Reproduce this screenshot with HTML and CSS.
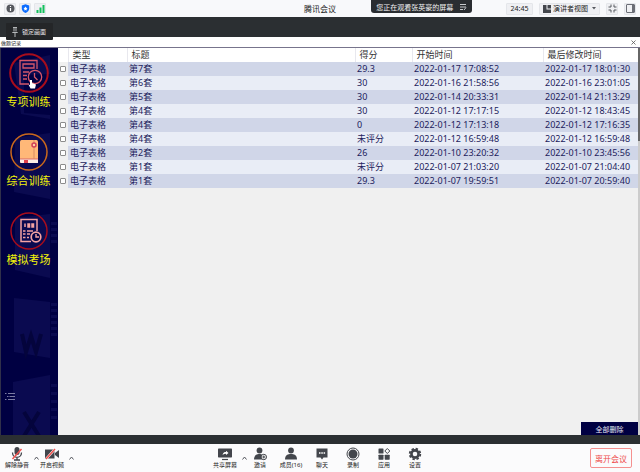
FILE: index.html
```html
<!DOCTYPE html>
<html lang="zh-CN">
<head>
  <meta charset="UTF-8" />
  <meta name="viewport" content="width=device-width, initial-scale=1.0"/>
  <title>腾讯会议</title>
  <link rel="stylesheet" href="styles.css">
</head>
<body>
  <div class="meeting">
    <header class="topbar">
      <div class="status">
        <span class="chip"><svg width="9" height="9" viewBox="0 0 9 9"><circle cx="4.5" cy="4.5" r="4" fill="#55585e"/><path d="M4.5 4v3M4.5 2v1" stroke="#fff" stroke-width="1.2"/></svg></span>
        <span class="chip"><svg width="9" height="9" viewBox="0 0 9 9"><path d="M4.5 0.3L8.2 1.6V4.5C8.2 6.8 6.5 8.2 4.5 8.9C2.5 8.2 0.8 6.8 0.8 4.5V1.6Z" fill="#0b6cff"/><path d="M4.5 2.6l.7 1.2 1.3.3-.9 1 .1 1.4-1.2-.6-1.2.6.1-1.4-.9-1 1.3-.3z" fill="#fff"/></svg></span>
        <span class="chip"><svg width="9" height="9" viewBox="0 0 9 9"><path d="M1.5 9V6M4.5 9V3.5M7.5 9V1" stroke="#12c15c" stroke-width="2"/></svg></span>
      </div>
      <h1>腾讯会议</h1>
      <div class="view-tools">
        <span class="chip timer">24:45</span>
        <button type="button" class="chip view-btn">
          <svg width="8" height="8" viewBox="0 0 8 8"><path d="M0 0h3.500v4.500H8V8H0z M4.500 0H8v3.500H4.500z" fill="#43464c"/></svg>
          演讲者视图
          <svg class="caret" width="4" height="3" viewBox="0 0 4 3"><path d="M0 0h4L2 2.500z" fill="#55585e"/></svg>
        </button>
        <button type="button" class="chip" aria-label="全屏"><svg width="9" height="9" viewBox="0 0 9 9" fill="none" stroke="#55585e"><path d="M3 .5v2.500H.5M6 .5v2.500h2.500M3 8.500V6H.5M6 8.500V6h2.500"/></svg></button>
        <button type="button" class="chip" aria-label="侧栏"><svg width="9" height="9" viewBox="0 0 9 9" fill="none" stroke="#6b6e76"><rect x=".5" y=".5" width="8" height="8" rx=".5"/><path d="M7 1v7" stroke-width="2"/></svg></button>
      </div>
      <div class="watching">
        <span>您正在观看张英豪的屏幕</span>
        <svg width="8" height="8" viewBox="0 0 8 8" fill="none" stroke="#c8cacd"><path d="M1 1.500h6M1 4h6M1 6.500h3M5 7l2-2.500"/></svg>
      </div>
    </header>

    <div class="stage">
      <button type="button" class="pin">
        <svg width="6" height="10" viewBox="0 0 6 10" fill="none" stroke="#b5b8ba"><path d="M1 .5h4M2 1v3.500M4 1v3.500M.3 5.500h5.400M3 5.500V10"/></svg>
        锁定画面
      </button>

      <div class="window">
        <div class="window-title">
          <span>做题记录</span>
          <button type="button" aria-label="关闭"><svg width="5" height="5" viewBox="0 0 5 5"><path d="M.5 .5l4 4M4.500 .5l-4 4" stroke="#555" stroke-width=".8"/></svg></button>
        </div>

        <div class="window-body">
          <nav class="sidebar">
            <svg class="pattern" width="57" height="388" viewBox="0 0 57 388" aria-hidden="true">
              <g fill="#0a0a50">
                <path d="M13 15L49 7V26L23 27V65L49 67V71L20 66zM14 90L49 85V151L13 144zM14 170L49 166V230L14 222zM13 250L49 254V310L13 304zM12 334L49 327V388H12z"/>
                <path d="M50 174h6v3h-6zM50 180h6v3h-6zM50 186h6v3h-6zM50 192h6v3h-6zM50 255h6v3h-6zM50 261h6v3h-6zM50 267h6v3h-6zM50 273h6v3h-6zM50 279h6v3h-6zM50 285h6v3h-6zM50 336h6v3h-6zM50 344h6v3h-6zM50 352h6v3h-6zM50 360h6v3h-6zM50 368h6v3h-6z"/>
              </g>
              <g fill="none" stroke="#04043c" stroke-width="4"><path d="M21 286l4 18 5-16 5 16 5-18M23 364l15 24M38 364l-15 24"/></g>
            </svg>
            <a href="#" class="nav-item active">
              <svg width="40" height="40" viewBox="0 0 40 40" fill="none">
                <circle cx="20" cy="20" r="18.800" stroke="#a80d1c" stroke-width="2"/>
                <g stroke="#d4576a" stroke-width="1.300"><path d="M20 31H11V7.500H28V16M14 11h11v4H14zM14 19h6M14 22.500h4M14 26h4"/><circle cx="26" cy="24" r="6.700"/><path d="M25.500 20v4l3 3"/></g>
                <path d="M21 27v5l-1.500-.5 2 4h4.500l1-4-4-1.500V27z" fill="#fff"/>
              </svg>
              <span>专项训练</span>
            </a>
            <a href="#" class="nav-item">
              <svg width="40" height="40" viewBox="0 0 40 40">
                <circle cx="20" cy="20" r="18" fill="none" stroke="#c9681c" stroke-width="1.500"/>
                <rect x="11" y="8" width="18" height="23" rx="1.500" fill="#ffb878"/>
                <path d="M11 27h18v4H12.500q-1.500 0-1.500-1.500z" fill="#fff1e6"/><path d="M11 27h18" stroke="#d96b68"/><path d="M15 28h4v3h-4z" fill="#e1424c"/>
                <path d="M25 8v19" stroke="#d98b63"/><circle cx="25" cy="13" r="2" fill="#ffd0a0" stroke="#cf3f58" stroke-width="1.500"/>
              </svg>
              <span>综合训练</span>
            </a>
            <a href="#" class="nav-item">
              <svg width="40" height="40" viewBox="0 0 40 40" fill="none">
                <circle cx="20" cy="20" r="18" stroke="#a80d1c" stroke-width="1.500"/>
                <g stroke="#f4a3a3" stroke-width="1.500"><path d="M22 30.500H12V8.500H28V20"/><path d="M16 16v-3.500M19 13h1.500v3H19zM23 13h1.500v3H23zM14 20h2.500M18 20h6M14 23h2.500M18 23h3M14 26.500h2.500M18 26.500h2"/></g>
                <circle cx="27" cy="26" r="4.800" fill="#000042" stroke="#f4a3a3" stroke-width="1.700"/><path d="M27 23v3h3" stroke="#f4a3a3" stroke-width="1.400"/>
              </svg>
              <span>模拟考场</span>
            </a>
            <button type="button" class="list-btn" aria-label="列表"><svg width="10" height="9" viewBox="0 0 10 9" stroke="#7c7ca4"><path d="M0 1.500h1.500M3 1.500h7M2 4.500h1.500M4.500 4.500H10M0 7.500h1.500M3 7.500h7"/></svg></button>
          </nav>

          <main class="records">
            <table>
              <thead>
                <tr><th class="col-check"></th><th class="col-type">类型</th><th class="col-title">标题</th><th class="col-score">得分</th><th class="col-start">开始时间</th><th class="col-edit">最后修改时间</th></tr>
              </thead>
              <tbody>
                <tr><td><input type="checkbox" aria-label="选择第7套"></td><td>电子表格</td><td>第7套</td><td>29.3</td><td>2022-01-17 17:08:52</td><td>2022-01-17 18:01:30</td></tr>
                <tr><td><input type="checkbox" aria-label="选择第6套"></td><td>电子表格</td><td>第6套</td><td>30</td><td>2022-01-16 21:58:56</td><td>2022-01-16 23:01:05</td></tr>
                <tr><td><input type="checkbox" aria-label="选择第5套"></td><td>电子表格</td><td>第5套</td><td>30</td><td>2022-01-14 20:33:31</td><td>2022-01-14 21:13:29</td></tr>
                <tr><td><input type="checkbox" aria-label="选择第4套"></td><td>电子表格</td><td>第4套</td><td>30</td><td>2022-01-12 17:17:15</td><td>2022-01-12 18:43:45</td></tr>
                <tr><td><input type="checkbox" aria-label="选择第4套"></td><td>电子表格</td><td>第4套</td><td>0</td><td>2022-01-12 17:13:18</td><td>2022-01-12 17:16:35</td></tr>
                <tr><td><input type="checkbox" aria-label="选择第4套"></td><td>电子表格</td><td>第4套</td><td>未评分</td><td>2022-01-12 16:59:48</td><td>2022-01-12 16:59:48</td></tr>
                <tr><td><input type="checkbox" aria-label="选择第2套"></td><td>电子表格</td><td>第2套</td><td>26</td><td>2022-01-10 23:20:32</td><td>2022-01-10 23:45:56</td></tr>
                <tr><td><input type="checkbox" aria-label="选择第1套"></td><td>电子表格</td><td>第1套</td><td>未评分</td><td>2022-01-07 21:03:20</td><td>2022-01-07 21:04:40</td></tr>
                <tr><td><input type="checkbox" aria-label="选择第1套"></td><td>电子表格</td><td>第1套</td><td>29.3</td><td>2022-01-07 19:59:51</td><td>2022-01-07 20:59:40</td></tr>
              </tbody>
            </table>
            <button type="button" class="delete-all">全部删除</button>
          </main>
          <div class="scrollbar"></div>
        </div>
      </div>
    </div>

    <footer class="toolbar">
      <div class="tools">
        <button type="button" class="tool"><svg width="14" height="14" viewBox="0 0 14 14" fill="none" stroke="#43464c"><rect x="4.500" y="0" width="5" height="8" rx="2.500" fill="#43464c" stroke="none"/><path d="M2.500 5.500C2.500 12 11.500 12 11.500 5.500M7 10.500V13M4 13h6" stroke-width="1.300"/><path d="M2.500 12L11.500 2" stroke="#f0524f" stroke-width="1.500"/></svg>解除静音</button>
        <button type="button" class="more" aria-label="音频选项"><svg width="5" height="4" viewBox="0 0 5 4"><path d="M.5 3.500l2-2.500 2 2.500" fill="none" stroke="#55585e"/></svg></button>
        <button type="button" class="tool"><svg width="14" height="14" viewBox="0 0 14 14"><path d="M0 2.500h9.500v9H0zM10 6l4-3v8l-4-3z" fill="#43464c"/><path d="M1 12L10 2" stroke="#fff" stroke-width="2.500"/><path d="M1 12L10 2" stroke="#f0524f" stroke-width="1.500"/></svg>开启视频</button>
        <button type="button" class="more" aria-label="视频选项"><svg width="5" height="4" viewBox="0 0 5 4"><path d="M.5 3.500l2-2.500 2 2.500" fill="none" stroke="#55585e"/></svg></button>
      </div>
      <div class="tools center">
        <button type="button" class="tool"><svg width="14" height="14" viewBox="0 0 14 14"><rect x="0" y="1.500" width="14" height="9" rx=".7" fill="#43464c"/><path d="M4 12.500h6" stroke="#43464c" stroke-width="1.200"/><path d="M4.500 8C5 5.500 6.500 5 8 5V3.700L10.500 6 8 8V6.700Q6 6.700 4.500 8z" fill="#fff"/></svg>共享屏幕</button>
        <button type="button" class="more" aria-label="共享选项"><svg width="5" height="4" viewBox="0 0 5 4"><path d="M.5 3.500l2-2.500 2 2.500" fill="none" stroke="#55585e"/></svg></button>
        <button type="button" class="tool"><svg width="14" height="14" viewBox="0 0 14 14"><circle cx="6.500" cy="3.500" r="2.900" fill="#43464c"/><path d="M1 12.500C1 8 4 7 6.500 7S10.500 7.500 11 12.500z" fill="#43464c"/><circle cx="10.800" cy="10" r="2.700" fill="#fff" stroke="#43464c"/><path d="M9.300 10h3M10.800 8.500v3" stroke="#43464c"/></svg>邀请</button>
        <button type="button" class="tool"><svg width="14" height="14" viewBox="0 0 14 14" fill="#43464c"><circle cx="7" cy="3.500" r="2.900"/><path d="M1 12.500C1 8 4 7 7 7s6 1 6 5.500z"/></svg>成员(16)</button>
        <button type="button" class="tool"><svg width="14" height="14" viewBox="0 0 14 14"><path d="M1.500 1.500h11v9H8.500L7 12.500 5.500 10.500h-4z" fill="#43464c"/><path d="M4 6h1.500M6.300 6h1.500M8.600 6h1.500" stroke="#fff" stroke-width="1.500"/></svg>聊天</button>
        <button type="button" class="tool"><svg width="14" height="14" viewBox="0 0 14 14"><circle cx="7" cy="7" r="6" fill="none" stroke="#43464c"/><circle cx="7" cy="7" r="4.500" fill="#43464c"/></svg>录制</button>
        <button type="button" class="tool"><svg width="14" height="14" viewBox="0 0 14 14" fill="#43464c"><rect x="1.500" y="1.500" width="5" height="5" rx=".6"/><rect x="1.500" y="7.700" width="5" height="5" rx=".6"/><rect x="7.700" y="7.700" width="5" height="5" rx=".6"/><path d="M10.300 1.500l2.500 2.500-2.500 2.500L7.800 4z" fill="none" stroke="#43464c"/></svg>应用</button>
        <button type="button" class="tool"><svg width="14" height="14" viewBox="0 0 14 14"><circle cx="7" cy="7" r="3.600" fill="none" stroke="#43464c" stroke-width="2.600"/><circle cx="7" cy="7" r="5.300" fill="none" stroke="#43464c" stroke-width="1.800" stroke-dasharray="2.400 1.763"/></svg>设置</button>
      </div>
      <button type="button" class="leave">离开会议</button>
    </footer>
  </div>
</body>
</html>
```
FILE: styles.css
```css
* {
  box-sizing: border-box;
}

body {
  margin: 0;
  font-family: "Noto Sans", "Noto Sans CJK SC", sans-serif;
  font-size: 9px;
  color: #222;
}

button {
  padding: 0;
  border: none;
  background: none;
  font: inherit;
  color: inherit;
  cursor: pointer;
}

svg {
  display: block;
  flex: none;
}

.meeting {
  display: flex;
  flex-direction: column;
  min-height: 100vh;
}

/* top bar */
.topbar {
  position: relative;
  display: grid;
  grid-template-columns: 1fr auto 1fr;
  align-items: center;
  height: 17px;
  padding: 0 4px;
  background: #f8f9fb;
}

.topbar h1 {
  margin: 0;
  font-size: 8px;
  font-weight: normal;
  line-height: 16px;
}

.status,
.view-tools {
  display: flex;
  gap: 3px;
}

.view-tools {
  justify-content: flex-end;
  gap: 6px;
}

.chip {
  display: flex;
  align-items: center;
  justify-content: center;
  min-width: 12px;
  height: 12px;
  background: #eff0f3;
  border: 1px solid #e4e6ea;
  border-radius: 1px;
  font-size: 7px;
  line-height: 10px;
}

.timer {
  width: 27px;
}

.view-btn {
  gap: 2px;
  padding: 0 3px;
}

.caret {
  margin-left: 2px;
}

.watching {
  position: absolute;
  top: 0;
  left: 58%;
  display: flex;
  align-items: center;
  gap: 6px;
  height: 13px;
  padding: 0 5px;
  background: #2a2d31;
  border-radius: 0 0 3px 3px;
  color: #f2f2f2;
  font-size: 7px;
}

/* shared screen */
.stage {
  position: relative;
  flex: 1;
  display: flex;
  flex-direction: column;
  padding: 20px 0 9px;
  background: #2b2f32;
}

.pin {
  position: absolute;
  top: 6px;
  left: 6px;
  display: flex;
  align-items: center;
  gap: 4px;
  width: 47px;
  height: 17px;
  padding-left: 6px;
  background: #242628;
  border-radius: 1px;
  color: #e4e4e4;
  font-size: 6px;
}

.window {
  flex: 1;
  display: flex;
  flex-direction: column;
  background: #f0f0f0;
}

.window-title {
  display: flex;
  align-items: center;
  justify-content: space-between;
  height: 11px;
  padding: 0 4px 0 1px;
  background: #fff;
  border-bottom: 1px solid #77748c;
  font-size: 5px;
}

.window-body {
  flex: 1;
  display: flex;
}

/* sidebar */
.sidebar {
  position: relative;
  display: flex;
  flex-direction: column;
  gap: 22px;
  width: 58px;
  padding: 5px 2px 0 0;
  background: #000042;
  border-left: 1px solid #30304a;
  overflow: hidden;
}

.pattern {
  position: absolute;
  top: 0;
  left: 0;
}

.nav-item {
  position: relative;
  display: flex;
  flex-direction: column;
  align-items: center;
  color: #f2f20a;
  font-size: 11px;
  line-height: 17px;
  text-decoration: none;
}

.list-btn {
  position: absolute;
  left: 4px;
  bottom: 34px;
}

/* records table */
.records {
  flex: 1;
  display: flex;
  flex-direction: column;
  justify-content: space-between;
  align-items: flex-end;
}

table {
  width: 100%;
  border-collapse: collapse;
  table-layout: fixed;
  color: #1c1c5c;
}

th,
td {
  height: 14px;
  padding: 0 2px;
  font-weight: normal;
  line-height: 14px;
  text-align: left;
  white-space: nowrap;
}

th {
  padding-left: 4px;
  background: #fff;
  border-left: 1px solid #e8e8ee;
  color: #333;
}

th:first-child {
  border-left: none;
}

tbody tr {
  background: #e9edf6;
}

tbody tr:nth-child(odd) {
  background: #d0d6e8;
}

tbody td:first-child {
  background: #f0f0f0;
}

.col-check {
  width: 10px;
}

.col-type {
  width: 59px;
}

.col-score {
  width: 57px;
}

.col-start {
  width: 131px;
}

.col-edit {
  width: 95px;
}

input[type="checkbox"] {
  appearance: none;
  display: block;
  width: 6px;
  height: 6px;
  margin: 0;
  background: #fff;
  border: 1px solid #8c8c8c;
  border-radius: 1px;
}

.delete-all {
  width: 57px;
  height: 13px;
  background: #000042;
  color: #e8e8f4;
  font-size: 7px;
}

.scrollbar {
  width: 2px;
  background: linear-gradient(#666 93px, #ccc 93px);
}

/* bottom toolbar */
.toolbar {
  display: grid;
  grid-template-columns: 1fr auto 1fr;
  align-items: center;
  height: 28px;
  padding: 0 4px;
  background: #fbfbfc;
}

.tools {
  display: flex;
  align-items: center;
}

.tool {
  display: flex;
  flex-direction: column;
  align-items: center;
  width: 26px;
  font-size: 6px;
  line-height: 8px;
  white-space: nowrap;
}

.more {
  display: flex;
  justify-content: flex-end;
  width: 9px;
}

.center .tool + .tool {
  margin-left: 5px;
}

.leave {
  justify-self: end;
  width: 42px;
  height: 20px;
  margin-right: 4px;
  border: 1px solid #f5908f;
  border-radius: 2px;
  color: #ee4a4a;
  font-size: 8px;
}
```
